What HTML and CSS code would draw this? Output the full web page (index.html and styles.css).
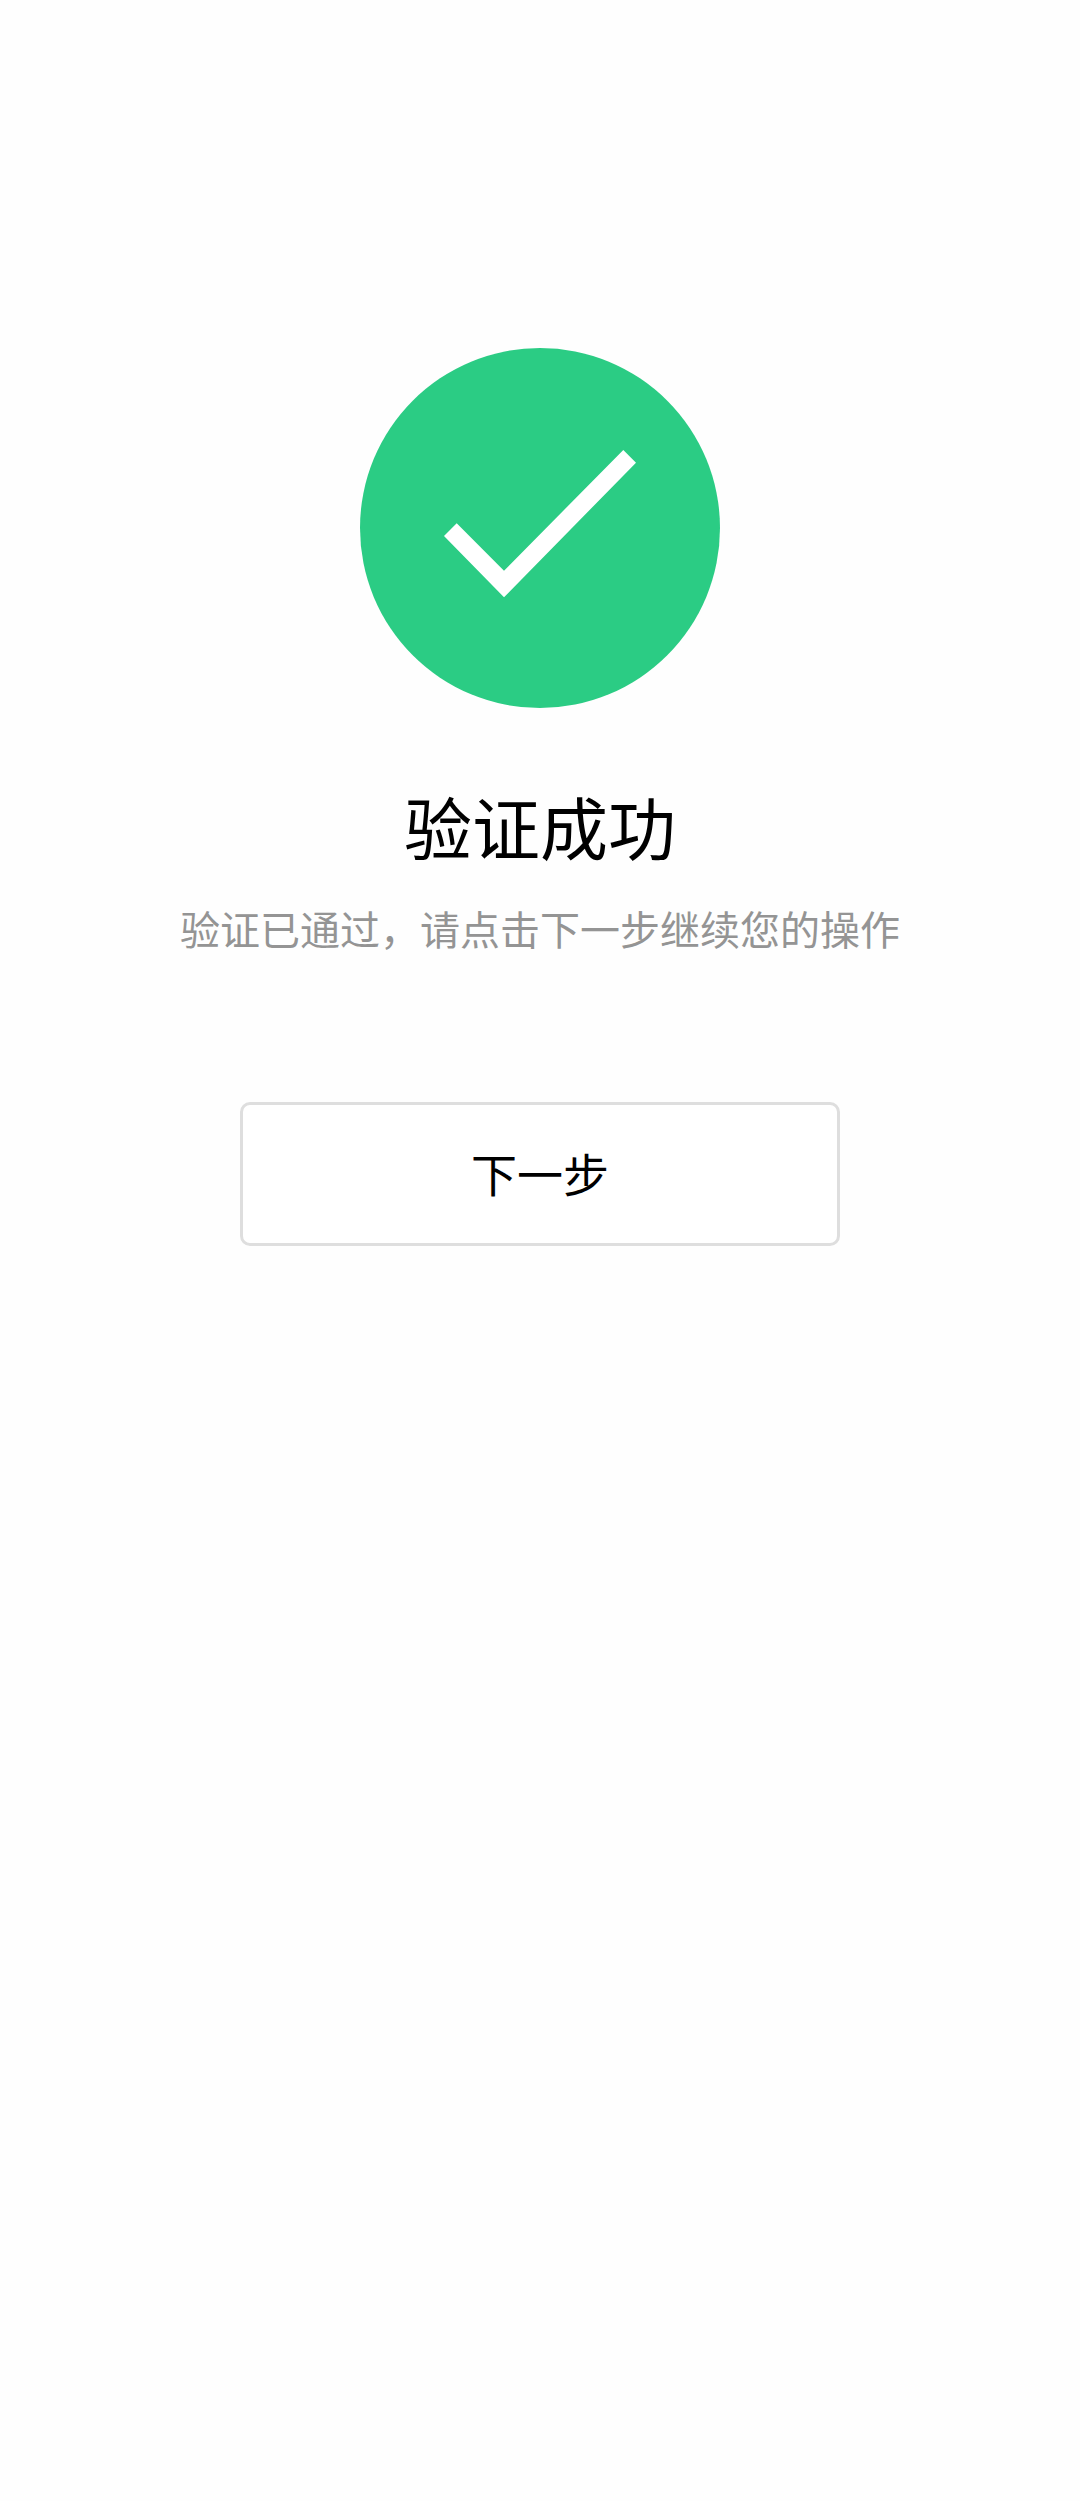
FILE: index.html
```html
<!DOCTYPE html>
<html lang="zh-CN">
<head>
<meta charset="utf-8">
<title>验证成功</title>
<link rel="stylesheet" href="styles.css">
</head>
<body>
<main class="page">
  <svg class="status-icon" viewBox="0 0 360 360" aria-hidden="true">
    <circle cx="180" cy="180" r="180" fill="#2bcc84"/>
    <polygon points="84,188 96.700,175.300 144,222.700 263.300,102 276,114.700 144,249.300" fill="#ffffff"/>
  </svg>
  <h1 class="title">验证成功</h1>
  <p class="subtitle">验证已通过，请点击下一步继续您的操作</p>
  <button class="next" type="button">下一步</button>
</main>
</body>
</html>
```

FILE: styles.css
```css
* { box-sizing: border-box; }
html, body { margin: 0; padding: 0; background: #fefefe; }
body {
  width: 1080px;
  height: 2501px;
  overflow: hidden;
  font-family: "Noto Sans CJK SC", sans-serif;
}
.page {
  display: flex;
  flex-direction: column;
  align-items: center;
  padding-top: 348px;
}
.status-icon { display: block; width: 360px; height: 360px; }
.title {
  margin: 68px 0 0;
  font-size: 68px;
  line-height: 100px;
  font-weight: 400;
  color: #000;
}
.subtitle {
  margin: 22px 0 0;
  font-size: 40px;
  line-height: 60px;
  font-weight: 400;
  color: #949494;
}
.next {
  width: 600px;
  height: 144px;
  margin-top: 144px;
  padding: 0 0 5px;
  border: 3px solid #dedede;
  border-radius: 10px;
  background: #fff;
  font-family: inherit;
  font-size: 46px;
  color: #000;
}
```
